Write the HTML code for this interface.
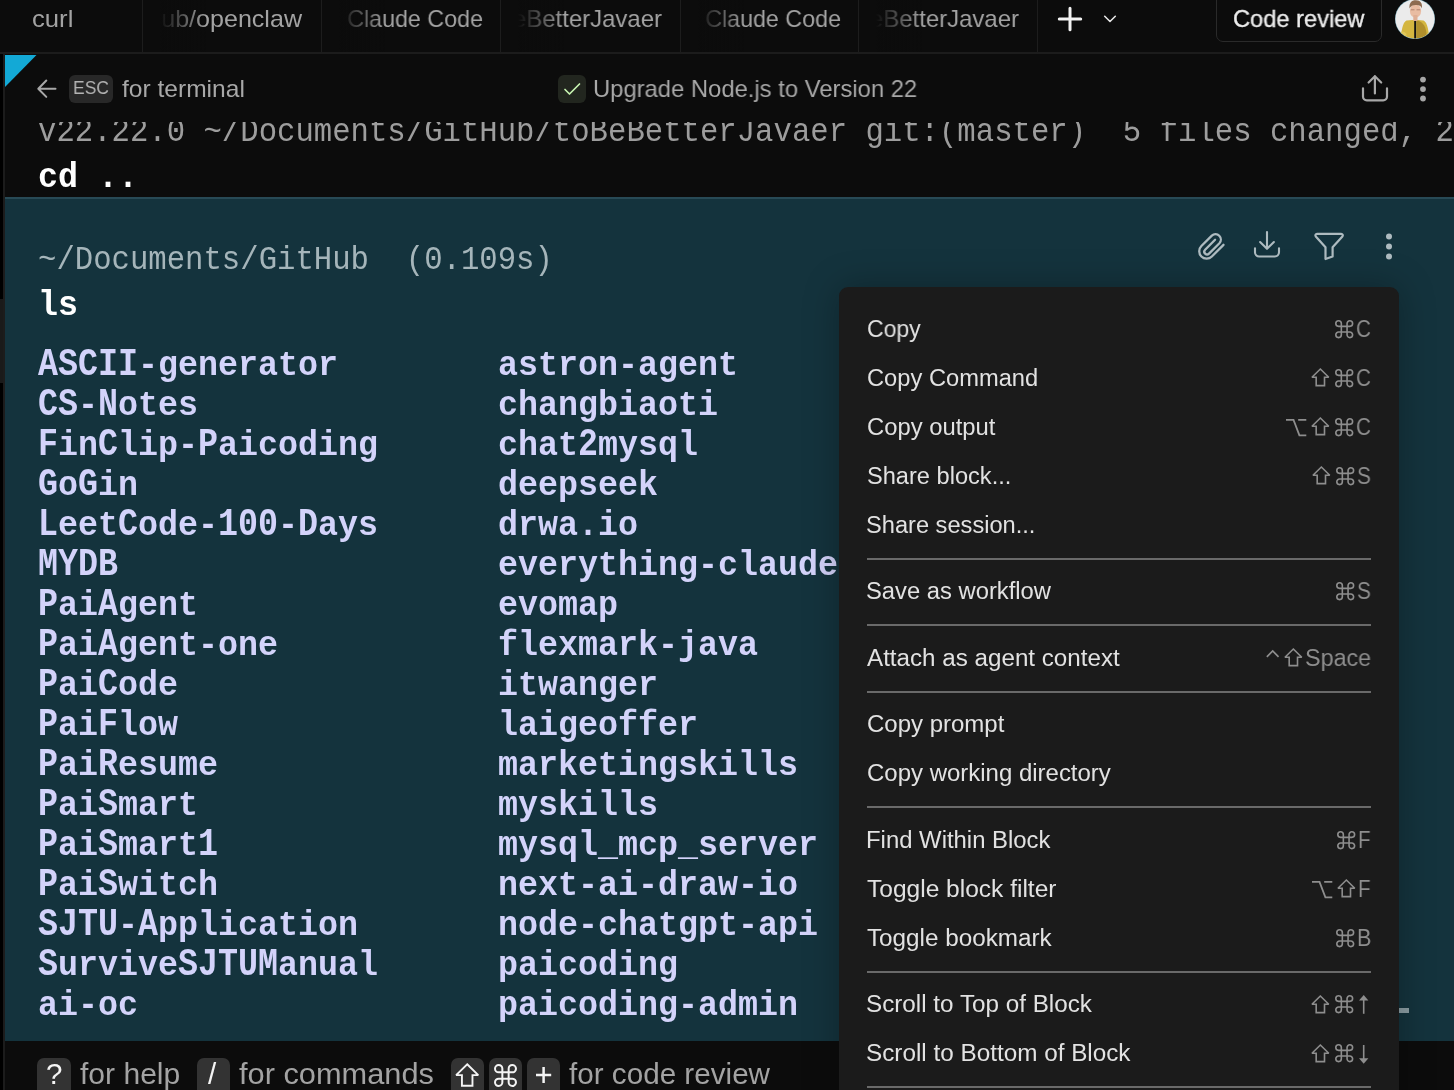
<!DOCTYPE html>
<html><head><meta charset="utf-8"><style>
html,body{margin:0;padding:0;}
body{width:1454px;height:1090px;overflow:hidden;background:#0c0c0c;position:relative;font-family:'Liberation Sans',sans-serif;}
.t{position:absolute;white-space:pre;will-change:transform;}
.a{position:absolute;}
.u{display:inline-block;transform:scaleY(1.065);transform-origin:0 28.87px;}
svg.a{overflow:visible;}
</style></head><body>
<div class="a" style="left:0;top:52px;width:1454px;height:2px;background:#1c1c1c"></div><div class="a" style="left:142px;top:0;width:1px;height:52px;background:#1d1d1d"></div><div class="a" style="left:321px;top:0;width:1px;height:52px;background:#1d1d1d"></div><div class="a" style="left:500px;top:0;width:1px;height:52px;background:#1d1d1d"></div><div class="a" style="left:680px;top:0;width:1px;height:52px;background:#1d1d1d"></div><div class="a" style="left:858px;top:0;width:1px;height:52px;background:#1d1d1d"></div><div class="a" style="left:1037px;top:0;width:1px;height:52px;background:#1d1d1d"></div><div class="t" style="left:31.93px;top:3.68px;font-family:'Liberation Sans', sans-serif;font-size:24px;line-height:30.0px;color:#a3a3a3;font-weight:normal;transform:scale(1.0694,1.0);transform-origin:0 23.32px;">curl</div>
<div class="a" style="left:160px;top:0;width:161px;height:52px;overflow:hidden"><div class="t" style="left:-457.56px;width:600px;text-align:right;top:3.70px;font-size:24px;line-height:30px;color:#a3a3a3;transform:scaleX(1.0448);transform-origin:600px 0">GitHub/openclaw</div><div class="a" style="left:0;top:0;width:46px;height:52px;background:linear-gradient(90deg,#0c0c0c 0%,rgba(12,12,12,0) 100%)"></div></div><div class="a" style="left:339px;top:0;width:161px;height:52px;overflow:hidden"><div class="t" style="left:-456.43px;width:600px;text-align:right;top:3.70px;font-size:24px;line-height:30px;color:#a3a3a3;transform:scaleX(0.9696);transform-origin:600px 0">· Claude Code</div><div class="a" style="left:0;top:0;width:46px;height:52px;background:linear-gradient(90deg,#0c0c0c 0%,rgba(12,12,12,0) 100%)"></div></div><div class="a" style="left:518px;top:0;width:162px;height:52px;overflow:hidden"><div class="t" style="left:-456.10px;width:600px;text-align:right;top:3.70px;font-size:24px;line-height:30px;color:#a3a3a3;transform:scaleX(0.9978);transform-origin:600px 0">toBeBetterJavaer</div><div class="a" style="left:0;top:0;width:46px;height:52px;background:linear-gradient(90deg,#0c0c0c 0%,rgba(12,12,12,0) 100%)"></div></div><div class="a" style="left:698px;top:0;width:160px;height:52px;overflow:hidden"><div class="t" style="left:-457.43px;width:600px;text-align:right;top:3.70px;font-size:24px;line-height:30px;color:#a3a3a3;transform:scaleX(0.9696);transform-origin:600px 0">· Claude Code</div><div class="a" style="left:0;top:0;width:46px;height:52px;background:linear-gradient(90deg,#0c0c0c 0%,rgba(12,12,12,0) 100%)"></div></div><div class="a" style="left:876px;top:0;width:161px;height:52px;overflow:hidden"><div class="t" style="left:-457.10px;width:600px;text-align:right;top:3.70px;font-size:24px;line-height:30px;color:#a3a3a3;transform:scaleX(0.9978);transform-origin:600px 0">toBeBetterJavaer</div><div class="a" style="left:0;top:0;width:46px;height:52px;background:linear-gradient(90deg,#0c0c0c 0%,rgba(12,12,12,0) 100%)"></div></div><svg class="a" style="left:1056px;top:5px" width="28" height="28" viewBox="0 0 28 28"><path d="M14 3.3V24.7M3.3 14H24.7" stroke="#f2f2f2" stroke-width="3" stroke-linecap="round"/></svg><svg class="a" style="left:1102px;top:13px" width="16" height="12" viewBox="0 0 16 12"><path d="M2.7 3.3L8 8.5L13.3 3.3" fill="none" stroke="#e6e6e6" stroke-width="1.6" stroke-linecap="round" stroke-linejoin="round"/></svg><div class="a" style="left:1216px;top:-10px;width:164px;height:50px;border:1.5px solid #2a2a2a;border-radius:7px;"></div><div class="t" style="left:1233.42px;top:3.68px;font-family:'Liberation Sans', sans-serif;font-size:24px;line-height:30.0px;color:#ececec;font-weight:normal;transform:scale(0.9848,1.0);transform-origin:0 23.32px;-webkit-text-stroke:0.35px #ececec;">Code review</div>
<svg class="a" style="left:1395px;top:-1px" width="40" height="40" viewBox="0 0 40 40">
<defs><clipPath id="ac"><circle cx="20" cy="20" r="19.6"/></clipPath></defs>
<circle cx="20" cy="20" r="20" fill="#6a9aaa"/>
<g clip-path="url(#ac)"><rect width="40" height="40" fill="#ebebeb"/>
<path d="M11.5 21.5C8.5 23 7.2 28 6.3 34.5L5.5 40H34.5L33.8 34.5C33 28 31.5 23 28.5 21.5L22.5 21H17.5Z" fill="#d4b640"/>
<path d="M22 21.5C27 22.5 30.5 26 31.5 34L32 40H22Z" fill="#b08f2c"/>
<path d="M6 33C8 32 10 33 11.5 35L11 40H5.5Z" fill="#e0c85a"/>
<rect x="19.2" y="21.5" width="2" height="18.5" fill="#151515"/>
<ellipse cx="20.5" cy="12" rx="5.6" ry="6.8" fill="#e9bca2"/>
<rect x="18.3" y="16" width="4.2" height="6" fill="#dfae94"/>
<path d="M14.5 9.5C13.8 3.5 17 1 21 1.2C25.5 1.4 27.6 4 26.9 9.5C26 6.6 23.5 5.8 20.6 6C17.8 6.1 15.6 7 14.5 9.5Z" fill="#8d6b50"/>
<path d="M15.8 10.8H19.5M21.5 10.8H25.3" stroke="#9a6a5a" stroke-width="0.7"/>
</g></svg><div class="a" style="left:0;top:54px;width:3px;height:1036px;background:#000"></div><div class="a" style="left:0;top:299px;width:3px;height:84px;background:#1a1a1a"></div><div class="a" style="left:3px;top:54px;width:2px;height:1036px;background:#1c1c1c"></div><div class="t" style="left:38.00px;top:113.69px;font-family:'Liberation Mono', monospace;font-size:30.65px;line-height:38.31px;color:#9d9d9d;font-weight:normal;transform:scale(1.0000,1.09);transform-origin:0 27.31px;">v22.22.0 ~/Documents/GitHub/toBeBetterJavaer git:(master)  5 files changed, 2</div>
<div class="t" style="left:38.00px;top:157.80px;font-family:'Liberation Mono', monospace;font-size:33.333px;line-height:41.67px;color:#ffffff;font-weight:bold;transform:scale(1.0000,1.07);transform-origin:0 29.70px;">cd ..</div>
<div class="a" style="left:5px;top:54px;width:1449px;height:68px;background:#0c0c0c"></div><svg class="a" style="left:5px;top:54px" width="32" height="34" viewBox="0 0 32 34"><path d="M0 1H31.5L0 33Z" fill="#13a9d6"/></svg><svg class="a" style="left:36px;top:78px" width="22" height="22" viewBox="0 0 22 22"><path d="M19.5 10.7H2.8M10.3 2.5L2.3 10.7L10.3 18.9" fill="none" stroke="#a8a8a8" stroke-width="2" stroke-linecap="round" stroke-linejoin="round"/></svg><div class="a" style="left:69px;top:75px;width:44px;height:28px;background:#282828;border-radius:6px"></div><div class="t" style="left:72.98px;top:76.04px;font-family:'Liberation Sans', sans-serif;font-size:19px;line-height:23.75px;color:#b4b4b4;font-weight:normal;transform:scale(0.9216,1.0);transform-origin:0 18.46px;">ESC</div>
<div class="t" style="left:121.50px;top:73.68px;font-family:'Liberation Sans', sans-serif;font-size:24px;line-height:30.0px;color:#a8a8a8;font-weight:normal;transform:scale(1.0235,1.0);transform-origin:0 23.32px;">for terminal</div>
<div class="a" style="left:558px;top:75px;width:28px;height:28px;background:#22261f;border-radius:6px"></div><svg class="a" style="left:558px;top:75px" width="28" height="28" viewBox="0 0 28 28"><path d="M7 14.5L11.5 19L21.5 9" fill="none" stroke="#c6f3b0" stroke-width="1.7" stroke-linecap="round" stroke-linejoin="round"/></svg><div class="t" style="left:593.42px;top:73.68px;font-family:'Liberation Sans', sans-serif;font-size:24px;line-height:30.0px;color:#a8a8a8;font-weight:normal;transform:scale(0.9917,1.0);transform-origin:0 23.32px;">Upgrade Node.js to Version 22</div>
<svg class="a" style="left:1340px;top:60px" width="60" height="50" viewBox="0 0 60 50"><path d="M34.9 33.5V16.2M28.6 22.5L34.9 16.2L41.2 22.5" fill="none" stroke="#a8a8a8" stroke-width="2.2" stroke-linecap="round" stroke-linejoin="round"/><path d="M23 28.3V36.6C23 38.7 24.7 40.4 26.8 40.4H43.2C45.3 40.4 47 38.7 47 36.6V28.3" fill="none" stroke="#a8a8a8" stroke-width="2.2" stroke-linecap="round"/></svg><svg class="a" style="left:1413px;top:70px" width="20" height="40"><circle cx="10" cy="9.6" r="2.9" fill="#a6a6a6"/><circle cx="10" cy="19.1" r="2.9" fill="#a6a6a6"/><circle cx="10" cy="28.5" r="2.9" fill="#a6a6a6"/></svg><div class="a" style="left:5px;top:197px;width:1449px;height:844px;background:#14333d"></div><div class="a" style="left:5px;top:197px;width:1449px;height:2px;background:#284a56"></div><div class="t" style="left:38.00px;top:241.69px;font-family:'Liberation Mono', monospace;font-size:30.65px;line-height:38.31px;color:#a5b5ba;font-weight:normal;transform:scale(1.0000,1.09);transform-origin:0 27.31px;">~/Documents/GitHub  (0.109s)</div>
<div class="t" style="left:38.00px;top:285.80px;font-family:'Liberation Mono', monospace;font-size:33.333px;line-height:41.67px;color:#ffffff;font-weight:bold;transform:scale(1.0000,1.07);transform-origin:0 29.70px;">ls</div>
<div class="t" style="left:38.00px;top:345.80px;font-family:'Liberation Mono', monospace;font-size:33.333px;line-height:41.67px;color:#d3d3fa;font-weight:bold;transform:scale(1.0000,1.07);transform-origin:0 29.70px;"><span class="u">ASCII</span>-generator</div>
<div class="t" style="left:498.00px;top:345.80px;font-family:'Liberation Mono', monospace;font-size:33.333px;line-height:41.67px;color:#d3d3fa;font-weight:bold;transform:scale(1.0000,1.07);transform-origin:0 29.70px;">astron-agent</div>
<div class="t" style="left:38.00px;top:385.80px;font-family:'Liberation Mono', monospace;font-size:33.333px;line-height:41.67px;color:#d3d3fa;font-weight:bold;transform:scale(1.0000,1.07);transform-origin:0 29.70px;"><span class="u">CS</span>-<span class="u">N</span>otes</div>
<div class="t" style="left:498.00px;top:385.80px;font-family:'Liberation Mono', monospace;font-size:33.333px;line-height:41.67px;color:#d3d3fa;font-weight:bold;transform:scale(1.0000,1.07);transform-origin:0 29.70px;">changbiaoti</div>
<div class="t" style="left:38.00px;top:425.80px;font-family:'Liberation Mono', monospace;font-size:33.333px;line-height:41.67px;color:#d3d3fa;font-weight:bold;transform:scale(1.0000,1.07);transform-origin:0 29.70px;"><span class="u">F</span>in<span class="u">C</span>lip-<span class="u">P</span>aicoding</div>
<div class="t" style="left:498.00px;top:425.80px;font-family:'Liberation Mono', monospace;font-size:33.333px;line-height:41.67px;color:#d3d3fa;font-weight:bold;transform:scale(1.0000,1.07);transform-origin:0 29.70px;">chat<span class="u">2</span>mysql</div>
<div class="t" style="left:38.00px;top:465.80px;font-family:'Liberation Mono', monospace;font-size:33.333px;line-height:41.67px;color:#d3d3fa;font-weight:bold;transform:scale(1.0000,1.07);transform-origin:0 29.70px;"><span class="u">G</span>o<span class="u">G</span>in</div>
<div class="t" style="left:498.00px;top:465.80px;font-family:'Liberation Mono', monospace;font-size:33.333px;line-height:41.67px;color:#d3d3fa;font-weight:bold;transform:scale(1.0000,1.07);transform-origin:0 29.70px;">deepseek</div>
<div class="t" style="left:38.00px;top:505.80px;font-family:'Liberation Mono', monospace;font-size:33.333px;line-height:41.67px;color:#d3d3fa;font-weight:bold;transform:scale(1.0000,1.07);transform-origin:0 29.70px;"><span class="u">L</span>eet<span class="u">C</span>ode-<span class="u">100</span>-<span class="u">D</span>ays</div>
<div class="t" style="left:498.00px;top:505.80px;font-family:'Liberation Mono', monospace;font-size:33.333px;line-height:41.67px;color:#d3d3fa;font-weight:bold;transform:scale(1.0000,1.07);transform-origin:0 29.70px;">drwa.io</div>
<div class="t" style="left:38.00px;top:545.80px;font-family:'Liberation Mono', monospace;font-size:33.333px;line-height:41.67px;color:#d3d3fa;font-weight:bold;transform:scale(1.0000,1.07);transform-origin:0 29.70px;"><span class="u">MYDB</span></div>
<div class="t" style="left:498.00px;top:545.80px;font-family:'Liberation Mono', monospace;font-size:33.333px;line-height:41.67px;color:#d3d3fa;font-weight:bold;transform:scale(1.0000,1.07);transform-origin:0 29.70px;">everything-claude-code</div>
<div class="t" style="left:38.00px;top:585.80px;font-family:'Liberation Mono', monospace;font-size:33.333px;line-height:41.67px;color:#d3d3fa;font-weight:bold;transform:scale(1.0000,1.07);transform-origin:0 29.70px;"><span class="u">P</span>ai<span class="u">A</span>gent</div>
<div class="t" style="left:498.00px;top:585.80px;font-family:'Liberation Mono', monospace;font-size:33.333px;line-height:41.67px;color:#d3d3fa;font-weight:bold;transform:scale(1.0000,1.07);transform-origin:0 29.70px;">evomap</div>
<div class="t" style="left:38.00px;top:625.80px;font-family:'Liberation Mono', monospace;font-size:33.333px;line-height:41.67px;color:#d3d3fa;font-weight:bold;transform:scale(1.0000,1.07);transform-origin:0 29.70px;"><span class="u">P</span>ai<span class="u">A</span>gent-one</div>
<div class="t" style="left:498.00px;top:625.80px;font-family:'Liberation Mono', monospace;font-size:33.333px;line-height:41.67px;color:#d3d3fa;font-weight:bold;transform:scale(1.0000,1.07);transform-origin:0 29.70px;">flexmark-java</div>
<div class="t" style="left:38.00px;top:665.80px;font-family:'Liberation Mono', monospace;font-size:33.333px;line-height:41.67px;color:#d3d3fa;font-weight:bold;transform:scale(1.0000,1.07);transform-origin:0 29.70px;"><span class="u">P</span>ai<span class="u">C</span>ode</div>
<div class="t" style="left:498.00px;top:665.80px;font-family:'Liberation Mono', monospace;font-size:33.333px;line-height:41.67px;color:#d3d3fa;font-weight:bold;transform:scale(1.0000,1.07);transform-origin:0 29.70px;">itwanger</div>
<div class="t" style="left:38.00px;top:705.80px;font-family:'Liberation Mono', monospace;font-size:33.333px;line-height:41.67px;color:#d3d3fa;font-weight:bold;transform:scale(1.0000,1.07);transform-origin:0 29.70px;"><span class="u">P</span>ai<span class="u">F</span>low</div>
<div class="t" style="left:498.00px;top:705.80px;font-family:'Liberation Mono', monospace;font-size:33.333px;line-height:41.67px;color:#d3d3fa;font-weight:bold;transform:scale(1.0000,1.07);transform-origin:0 29.70px;">laigeoffer</div>
<div class="t" style="left:38.00px;top:745.80px;font-family:'Liberation Mono', monospace;font-size:33.333px;line-height:41.67px;color:#d3d3fa;font-weight:bold;transform:scale(1.0000,1.07);transform-origin:0 29.70px;"><span class="u">P</span>ai<span class="u">R</span>esume</div>
<div class="t" style="left:498.00px;top:745.80px;font-family:'Liberation Mono', monospace;font-size:33.333px;line-height:41.67px;color:#d3d3fa;font-weight:bold;transform:scale(1.0000,1.07);transform-origin:0 29.70px;">marketingskills</div>
<div class="t" style="left:38.00px;top:785.80px;font-family:'Liberation Mono', monospace;font-size:33.333px;line-height:41.67px;color:#d3d3fa;font-weight:bold;transform:scale(1.0000,1.07);transform-origin:0 29.70px;"><span class="u">P</span>ai<span class="u">S</span>mart</div>
<div class="t" style="left:498.00px;top:785.80px;font-family:'Liberation Mono', monospace;font-size:33.333px;line-height:41.67px;color:#d3d3fa;font-weight:bold;transform:scale(1.0000,1.07);transform-origin:0 29.70px;">myskills</div>
<div class="t" style="left:38.00px;top:825.80px;font-family:'Liberation Mono', monospace;font-size:33.333px;line-height:41.67px;color:#d3d3fa;font-weight:bold;transform:scale(1.0000,1.07);transform-origin:0 29.70px;"><span class="u">P</span>ai<span class="u">S</span>mart<span class="u">1</span></div>
<div class="t" style="left:498.00px;top:825.80px;font-family:'Liberation Mono', monospace;font-size:33.333px;line-height:41.67px;color:#d3d3fa;font-weight:bold;transform:scale(1.0000,1.07);transform-origin:0 29.70px;">mysql_mcp_server</div>
<div class="t" style="left:38.00px;top:865.80px;font-family:'Liberation Mono', monospace;font-size:33.333px;line-height:41.67px;color:#d3d3fa;font-weight:bold;transform:scale(1.0000,1.07);transform-origin:0 29.70px;"><span class="u">P</span>ai<span class="u">S</span>witch</div>
<div class="t" style="left:498.00px;top:865.80px;font-family:'Liberation Mono', monospace;font-size:33.333px;line-height:41.67px;color:#d3d3fa;font-weight:bold;transform:scale(1.0000,1.07);transform-origin:0 29.70px;">next-ai-draw-io</div>
<div class="t" style="left:38.00px;top:905.80px;font-family:'Liberation Mono', monospace;font-size:33.333px;line-height:41.67px;color:#d3d3fa;font-weight:bold;transform:scale(1.0000,1.07);transform-origin:0 29.70px;"><span class="u">SJTU</span>-<span class="u">A</span>pplication</div>
<div class="t" style="left:498.00px;top:905.80px;font-family:'Liberation Mono', monospace;font-size:33.333px;line-height:41.67px;color:#d3d3fa;font-weight:bold;transform:scale(1.0000,1.07);transform-origin:0 29.70px;">node-chatgpt-api</div>
<div class="t" style="left:38.00px;top:945.80px;font-family:'Liberation Mono', monospace;font-size:33.333px;line-height:41.67px;color:#d3d3fa;font-weight:bold;transform:scale(1.0000,1.07);transform-origin:0 29.70px;"><span class="u">S</span>urvive<span class="u">SJTUM</span>anual</div>
<div class="t" style="left:498.00px;top:945.80px;font-family:'Liberation Mono', monospace;font-size:33.333px;line-height:41.67px;color:#d3d3fa;font-weight:bold;transform:scale(1.0000,1.07);transform-origin:0 29.70px;">paicoding</div>
<div class="t" style="left:38.00px;top:985.80px;font-family:'Liberation Mono', monospace;font-size:33.333px;line-height:41.67px;color:#d3d3fa;font-weight:bold;transform:scale(1.0000,1.07);transform-origin:0 29.70px;">ai-oc</div>
<div class="t" style="left:498.00px;top:985.80px;font-family:'Liberation Mono', monospace;font-size:33.333px;line-height:41.67px;color:#d3d3fa;font-weight:bold;transform:scale(1.0000,1.07);transform-origin:0 29.70px;">paicoding-admin</div>
<svg class="a" style="left:1192px;top:226px" width="40" height="40" viewBox="0 0 40 40"><path d="M23.09 13.75L13.13 23.72A2.75 2.75 0 0 0 17.02 27.61L27.43 17.20A5.38 5.38 0 0 0 19.83 9.60L9.39 20.03A7.39 7.39 0 0 0 19.85 30.49L31.50 18.84" fill="none" stroke="#aebbc0" stroke-width="2.3" stroke-linecap="round" stroke-linejoin="round"/></svg><svg class="a" style="left:1248px;top:226px" width="40" height="40" viewBox="0 0 40 40"><path d="M19 6.1V22.4M12.1 16L19 22.8L25.9 16" fill="none" stroke="#aebbc0" stroke-width="2.1" stroke-linecap="round" stroke-linejoin="round"/><path d="M7 22.2V26.3C7 28.7 8.8 30.5 11.2 30.5H26.8C29.2 30.5 31 28.7 31 26.3V22.2" fill="none" stroke="#aebbc0" stroke-width="2.1" stroke-linecap="round"/></svg><svg class="a" style="left:1308px;top:226px" width="40" height="40" viewBox="0 0 40 40"><path d="M9 7.9H33.2C34.6 7.9 35.3 9.4 34.4 10.4L24.6 21.2V30.5L17.5 33V21.2L7.8 10.4C6.9 9.4 7.6 7.9 9 7.9Z" fill="none" stroke="#aebbc0" stroke-width="2.2" stroke-linejoin="round"/></svg><svg class="a" style="left:1379px;top:226px" width="20" height="40"><circle cx="10" cy="10.5" r="3" fill="#aebbc0"/><circle cx="10" cy="20.5" r="3" fill="#aebbc0"/><circle cx="10" cy="30.5" r="3" fill="#aebbc0"/></svg><div class="a" style="left:1399px;top:1008px;width:10px;height:5px;background:#8a9ca2"></div><div class="a" style="left:5px;top:1041px;width:1449px;height:49px;background:#0c0c0c"></div><div class="a" style="left:37.3px;top:1058px;width:33.5px;height:40px;background:#333333;border-radius:7px"></div><div class="t" style="left:45.50px;top:1055.83px;font-family:'Liberation Sans', sans-serif;font-size:29.5px;line-height:36.88px;color:#f4f4f4;font-weight:normal;">?</div>
<div class="t" style="left:80.20px;top:1055.83px;font-family:'Liberation Sans', sans-serif;font-size:29.5px;line-height:36.88px;color:#a3a3a3;font-weight:normal;transform:scale(1.0186,1.0);transform-origin:0 28.67px;">for help</div>
<div class="a" style="left:197.4px;top:1058px;width:33.0px;height:40px;background:#333333;border-radius:7px"></div><div class="t" style="left:208.00px;top:1055.83px;font-family:'Liberation Sans', sans-serif;font-size:29.5px;line-height:36.88px;color:#f4f4f4;font-weight:normal;">/</div>
<div class="t" style="left:239.00px;top:1055.83px;font-family:'Liberation Sans', sans-serif;font-size:29.5px;line-height:36.88px;color:#a3a3a3;font-weight:normal;transform:scale(1.0430,1.0);transform-origin:0 28.67px;">for commands</div>
<div class="a" style="left:450.6px;top:1058px;width:33.19999999999999px;height:40px;background:#333333;border-radius:7px"></div><svg class="a" style="left:454.80px;top:1062.50px" width="24.4" height="23.7"><path d="M12.20 1.23L23.26 12.09H17.47V22.75H6.93V12.09H1.14Z" fill="none" stroke="#f4f4f4" stroke-width="1.9" stroke-linejoin="miter" stroke-miterlimit="2"/></svg><div class="a" style="left:488.7px;top:1058px;width:33.099999999999966px;height:40px;background:#333333;border-radius:7px"></div><svg class="a" style="left:493.50px;top:1063.60px" width="23" height="23"><path d="M8.35 8.35V4.67A3.67 3.67 0 1 0 4.67 8.35H18.32A3.67 3.67 0 1 0 14.65 4.67V18.32A3.67 3.67 0 1 0 18.32 14.65H4.67A3.67 3.67 0 1 0 8.35 18.32Z" fill="none" stroke="#f4f4f4" stroke-width="2.0"/></svg><div class="a" style="left:526.6px;top:1058px;width:33.299999999999955px;height:40px;background:#333333;border-radius:7px"></div><svg class="a" style="left:535.9px;top:1067px" width="15.2" height="16.1"><path d="M7.6 0V16.1M0 8H15.2" stroke="#f4f4f4" stroke-width="2.5"/></svg><div class="t" style="left:569.00px;top:1055.83px;font-family:'Liberation Sans', sans-serif;font-size:29.5px;line-height:36.88px;color:#a3a3a3;font-weight:normal;transform:scale(1.0050,1.0);transform-origin:0 28.67px;">for code review</div>
<div class="a" style="left:839px;top:287px;width:560px;height:900px;background:#1b1b1b;border-radius:9px;box-shadow:0 0 36px rgba(0,0,0,0.28)"></div><div class="t" style="left:866.92px;top:314.86px;font-family:'Liberation Sans', sans-serif;font-size:23.5px;line-height:29.38px;color:#e2e2e2;font-weight:normal;transform:scale(0.9796,1.0);transform-origin:0 22.84px;">Copy</div>
<div class="t" style="left:1356.22px;top:314.86px;font-family:'Liberation Sans', sans-serif;font-size:23.5px;line-height:29.38px;color:#8e8e8e;font-weight:normal;transform:scale(0.8800,1.0);transform-origin:0 22.84px;">C</div>
<svg class="a" style="left:1334.70px;top:319.50px" width="18.4" height="18.4"><path d="M6.34 6.34V3.57A2.77 2.77 0 1 0 3.57 6.34H14.83A2.77 2.77 0 1 0 12.06 3.57V14.83A2.77 2.77 0 1 0 14.83 12.06H3.57A2.77 2.77 0 1 0 6.34 14.83Z" fill="none" stroke="#8e8e8e" stroke-width="1.6"/></svg><div class="t" style="left:866.89px;top:363.86px;font-family:'Liberation Sans', sans-serif;font-size:23.5px;line-height:29.38px;color:#e2e2e2;font-weight:normal;transform:scale(1.0083,1.0);transform-origin:0 22.84px;">Copy Command</div>
<div class="t" style="left:1356.22px;top:363.86px;font-family:'Liberation Sans', sans-serif;font-size:23.5px;line-height:29.38px;color:#8e8e8e;font-weight:normal;transform:scale(0.8800,1.0);transform-origin:0 22.84px;">C</div>
<svg class="a" style="left:1334.70px;top:368.50px" width="18.4" height="18.4"><path d="M6.34 6.34V3.57A2.77 2.77 0 1 0 3.57 6.34H14.83A2.77 2.77 0 1 0 12.06 3.57V14.83A2.77 2.77 0 1 0 14.83 12.06H3.57A2.77 2.77 0 1 0 6.34 14.83Z" fill="none" stroke="#8e8e8e" stroke-width="1.6"/></svg><svg class="a" style="left:1310.70px;top:368.20px" width="18.7" height="18.4"><path d="M9.35 1.04L17.74 9.20H13.51V17.60H5.19V9.20H0.96Z" fill="none" stroke="#8e8e8e" stroke-width="1.6" stroke-linejoin="miter" stroke-miterlimit="2"/></svg><div class="t" style="left:866.89px;top:412.86px;font-family:'Liberation Sans', sans-serif;font-size:23.5px;line-height:29.38px;color:#e2e2e2;font-weight:normal;transform:scale(1.0127,1.0);transform-origin:0 22.84px;">Copy output</div>
<div class="t" style="left:1356.22px;top:412.86px;font-family:'Liberation Sans', sans-serif;font-size:23.5px;line-height:29.38px;color:#8e8e8e;font-weight:normal;transform:scale(0.8800,1.0);transform-origin:0 22.84px;">C</div>
<svg class="a" style="left:1334.70px;top:417.50px" width="18.4" height="18.4"><path d="M6.34 6.34V3.57A2.77 2.77 0 1 0 3.57 6.34H14.83A2.77 2.77 0 1 0 12.06 3.57V14.83A2.77 2.77 0 1 0 14.83 12.06H3.57A2.77 2.77 0 1 0 6.34 14.83Z" fill="none" stroke="#8e8e8e" stroke-width="1.6"/></svg><svg class="a" style="left:1310.70px;top:417.20px" width="18.7" height="18.4"><path d="M9.35 1.04L17.74 9.20H13.51V17.60H5.19V9.20H0.96Z" fill="none" stroke="#8e8e8e" stroke-width="1.6" stroke-linejoin="miter" stroke-miterlimit="2"/></svg><svg class="a" style="left:1285.90px;top:418.50px" width="20.3" height="17.2"><path d="M0 0.90H7.51L13.40 16.30H20.30M12.18 0.90H20.30" fill="none" stroke="#8e8e8e" stroke-width="1.8"/></svg><div class="t" style="left:866.50px;top:461.86px;font-family:'Liberation Sans', sans-serif;font-size:23.5px;line-height:29.38px;color:#e2e2e2;font-weight:normal;transform:scale(1.0043,1.0);transform-origin:0 22.84px;">Share block...</div>
<div class="t" style="left:1357.01px;top:461.86px;font-family:'Liberation Sans', sans-serif;font-size:23.5px;line-height:29.38px;color:#8e8e8e;font-weight:normal;transform:scale(0.8857,1.0);transform-origin:0 22.84px;">S</div>
<svg class="a" style="left:1335.50px;top:466.50px" width="18.4" height="18.4"><path d="M6.34 6.34V3.57A2.77 2.77 0 1 0 3.57 6.34H14.83A2.77 2.77 0 1 0 12.06 3.57V14.83A2.77 2.77 0 1 0 14.83 12.06H3.57A2.77 2.77 0 1 0 6.34 14.83Z" fill="none" stroke="#8e8e8e" stroke-width="1.6"/></svg><svg class="a" style="left:1311.50px;top:466.20px" width="18.7" height="18.4"><path d="M9.35 1.04L17.74 9.20H13.51V17.60H5.19V9.20H0.96Z" fill="none" stroke="#8e8e8e" stroke-width="1.6" stroke-linejoin="miter" stroke-miterlimit="2"/></svg><div class="t" style="left:866.49px;top:510.86px;font-family:'Liberation Sans', sans-serif;font-size:23.5px;line-height:29.38px;color:#e2e2e2;font-weight:normal;transform:scale(1.0054,1.0);transform-origin:0 22.84px;">Share session...</div>
<div class="a" style="left:867px;top:557.50px;width:504px;height:2px;background:#6a6a6a"></div><div class="t" style="left:866.49px;top:577.36px;font-family:'Liberation Sans', sans-serif;font-size:23.5px;line-height:29.38px;color:#e2e2e2;font-weight:normal;transform:scale(1.0115,1.0);transform-origin:0 22.84px;">Save as workflow</div>
<div class="t" style="left:1357.01px;top:577.36px;font-family:'Liberation Sans', sans-serif;font-size:23.5px;line-height:29.38px;color:#8e8e8e;font-weight:normal;transform:scale(0.8857,1.0);transform-origin:0 22.84px;">S</div>
<svg class="a" style="left:1335.50px;top:582.00px" width="18.4" height="18.4"><path d="M6.34 6.34V3.57A2.77 2.77 0 1 0 3.57 6.34H14.83A2.77 2.77 0 1 0 12.06 3.57V14.83A2.77 2.77 0 1 0 14.83 12.06H3.57A2.77 2.77 0 1 0 6.34 14.83Z" fill="none" stroke="#8e8e8e" stroke-width="1.6"/></svg><div class="a" style="left:867px;top:624.00px;width:504px;height:2px;background:#6a6a6a"></div><div class="t" style="left:867.00px;top:643.86px;font-family:'Liberation Sans', sans-serif;font-size:23.5px;line-height:29.38px;color:#e2e2e2;font-weight:normal;transform:scale(1.0290,1.0);transform-origin:0 22.84px;">Attach as agent context</div>
<div class="t" style="left:1304.81px;top:643.86px;font-family:'Liberation Sans', sans-serif;font-size:23.5px;line-height:29.38px;color:#8e8e8e;font-weight:normal;transform:scale(0.9923,1.0);transform-origin:0 22.84px;">Space</div>
<svg class="a" style="left:1283.50px;top:648.20px" width="18.7" height="18.4"><path d="M9.35 1.04L17.74 9.20H13.51V17.60H5.19V9.20H0.96Z" fill="none" stroke="#8e8e8e" stroke-width="1.6" stroke-linejoin="miter" stroke-miterlimit="2"/></svg><svg class="a" style="left:1265.60px;top:649.50px" width="13.4" height="7.8"><path d="M0.85 6.95L6.70 1.02L12.55 6.95" fill="none" stroke="#8e8e8e" stroke-width="1.7"/></svg><div class="a" style="left:867px;top:690.50px;width:504px;height:2px;background:#6a6a6a"></div><div class="t" style="left:866.88px;top:710.36px;font-family:'Liberation Sans', sans-serif;font-size:23.5px;line-height:29.38px;color:#e2e2e2;font-weight:normal;transform:scale(1.0211,1.0);transform-origin:0 22.84px;">Copy prompt</div>
<div class="t" style="left:866.88px;top:759.36px;font-family:'Liberation Sans', sans-serif;font-size:23.5px;line-height:29.38px;color:#e2e2e2;font-weight:normal;transform:scale(1.0202,1.0);transform-origin:0 22.84px;">Copy working directory</div>
<div class="a" style="left:867px;top:806.00px;width:504px;height:2px;background:#6a6a6a"></div><div class="t" style="left:866.37px;top:825.86px;font-family:'Liberation Sans', sans-serif;font-size:23.5px;line-height:29.38px;color:#e2e2e2;font-weight:normal;transform:scale(1.0162,1.0);transform-origin:0 22.84px;">Find Within Block</div>
<div class="t" style="left:1358.05px;top:825.86px;font-family:'Liberation Sans', sans-serif;font-size:23.5px;line-height:29.38px;color:#8e8e8e;font-weight:normal;transform:scale(0.8750,1.0);transform-origin:0 22.84px;">F</div>
<svg class="a" style="left:1337.40px;top:830.50px" width="18.4" height="18.4"><path d="M6.34 6.34V3.57A2.77 2.77 0 1 0 3.57 6.34H14.83A2.77 2.77 0 1 0 12.06 3.57V14.83A2.77 2.77 0 1 0 14.83 12.06H3.57A2.77 2.77 0 1 0 6.34 14.83Z" fill="none" stroke="#8e8e8e" stroke-width="1.6"/></svg><div class="t" style="left:867.20px;top:874.86px;font-family:'Liberation Sans', sans-serif;font-size:23.5px;line-height:29.38px;color:#e2e2e2;font-weight:normal;transform:scale(1.0436,1.0);transform-origin:0 22.84px;">Toggle block filter</div>
<div class="t" style="left:1358.05px;top:874.86px;font-family:'Liberation Sans', sans-serif;font-size:23.5px;line-height:29.38px;color:#8e8e8e;font-weight:normal;transform:scale(0.8750,1.0);transform-origin:0 22.84px;">F</div>
<svg class="a" style="left:1337.10px;top:879.20px" width="18.7" height="18.4"><path d="M9.35 1.04L17.74 9.20H13.51V17.60H5.19V9.20H0.96Z" fill="none" stroke="#8e8e8e" stroke-width="1.6" stroke-linejoin="miter" stroke-miterlimit="2"/></svg><svg class="a" style="left:1312.30px;top:880.50px" width="20.3" height="17.2"><path d="M0 0.90H7.51L13.40 16.30H20.30M12.18 0.90H20.30" fill="none" stroke="#8e8e8e" stroke-width="1.8"/></svg><div class="t" style="left:867.20px;top:923.86px;font-family:'Liberation Sans', sans-serif;font-size:23.5px;line-height:29.38px;color:#e2e2e2;font-weight:normal;transform:scale(1.0318,1.0);transform-origin:0 22.84px;">Toggle bookmark</div>
<div class="t" style="left:1356.57px;top:923.86px;font-family:'Liberation Sans', sans-serif;font-size:23.5px;line-height:29.38px;color:#8e8e8e;font-weight:normal;transform:scale(0.9154,1.0);transform-origin:0 22.84px;">B</div>
<svg class="a" style="left:1336.00px;top:928.50px" width="18.4" height="18.4"><path d="M6.34 6.34V3.57A2.77 2.77 0 1 0 3.57 6.34H14.83A2.77 2.77 0 1 0 12.06 3.57V14.83A2.77 2.77 0 1 0 14.83 12.06H3.57A2.77 2.77 0 1 0 6.34 14.83Z" fill="none" stroke="#8e8e8e" stroke-width="1.6"/></svg><div class="a" style="left:867px;top:970.50px;width:504px;height:2px;background:#6a6a6a"></div><div class="t" style="left:866.47px;top:990.36px;font-family:'Liberation Sans', sans-serif;font-size:23.5px;line-height:29.38px;color:#e2e2e2;font-weight:normal;transform:scale(1.0317,1.0);transform-origin:0 22.84px;">Scroll to Top of Block</div>
<svg class="a" style="left:1358.90px;top:994.70px" width="9.4" height="18.8"><path d="M0 5.5L4.7 0L9.4 5.5Z" fill="#8e8e8e"/><path d="M4.7 4.5V18.8" stroke="#8e8e8e" stroke-width="1.6"/></svg><svg class="a" style="left:1334.70px;top:995.00px" width="18.4" height="18.4"><path d="M6.34 6.34V3.57A2.77 2.77 0 1 0 3.57 6.34H14.83A2.77 2.77 0 1 0 12.06 3.57V14.83A2.77 2.77 0 1 0 14.83 12.06H3.57A2.77 2.77 0 1 0 6.34 14.83Z" fill="none" stroke="#8e8e8e" stroke-width="1.6"/></svg><svg class="a" style="left:1310.70px;top:994.70px" width="18.7" height="18.4"><path d="M9.35 1.04L17.74 9.20H13.51V17.60H5.19V9.20H0.96Z" fill="none" stroke="#8e8e8e" stroke-width="1.6" stroke-linejoin="miter" stroke-miterlimit="2"/></svg><div class="t" style="left:866.47px;top:1039.36px;font-family:'Liberation Sans', sans-serif;font-size:23.5px;line-height:29.38px;color:#e2e2e2;font-weight:normal;transform:scale(1.0333,1.0);transform-origin:0 22.84px;">Scroll to Bottom of Block</div>
<svg class="a" style="left:1358.90px;top:1045.00px" width="9.4" height="18.8"><path d="M0 13.3L4.7 18.8L9.4 13.3Z" fill="#8e8e8e"/><path d="M4.7 0V14.3" stroke="#8e8e8e" stroke-width="1.6"/></svg><svg class="a" style="left:1334.70px;top:1044.00px" width="18.4" height="18.4"><path d="M6.34 6.34V3.57A2.77 2.77 0 1 0 3.57 6.34H14.83A2.77 2.77 0 1 0 12.06 3.57V14.83A2.77 2.77 0 1 0 14.83 12.06H3.57A2.77 2.77 0 1 0 6.34 14.83Z" fill="none" stroke="#8e8e8e" stroke-width="1.6"/></svg><svg class="a" style="left:1310.70px;top:1043.70px" width="18.7" height="18.4"><path d="M9.35 1.04L17.74 9.20H13.51V17.60H5.19V9.20H0.96Z" fill="none" stroke="#8e8e8e" stroke-width="1.6" stroke-linejoin="miter" stroke-miterlimit="2"/></svg><div class="a" style="left:867px;top:1086.00px;width:504px;height:2px;background:#6a6a6a"></div></body></html>
